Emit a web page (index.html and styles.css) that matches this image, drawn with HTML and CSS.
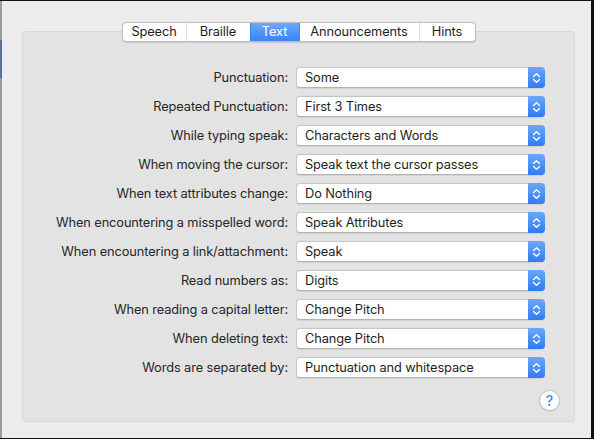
FILE: index.html
```html
<!DOCTYPE html>
<html>
<head>
<meta charset="utf-8">
<link rel="stylesheet" href="styles.css">
</head>
<body>
<div class="window">
  <div class="edge-accent"></div>
  <div class="content">
    <div class="tabs">
      <div class="tab t-speech">Speech</div>
      <div class="tab t-braille">Braille</div>
      <div class="tab t-text selected">Text</div>
      <div class="tab t-ann">Announcements</div>
      <div class="tab t-hints">Hints</div>
    </div>
    <div class="panel">
      <div class="form">
        <div class="label">Punctuation:</div>
        <div class="popup"><span class="value">Some</span><span class="stepper"><svg width="9" height="12" viewBox="0 0 9 12"><path d="M1.5 4.5 L4.5 1.8 L7.5 4.5 M1.5 7.5 L4.5 10.2 L7.5 7.5" fill="none" stroke="#fff" stroke-width="1.4" stroke-linecap="round" stroke-linejoin="round"/></svg></span></div>
        <div class="label">Repeated Punctuation:</div>
        <div class="popup"><span class="value">First 3 Times</span><span class="stepper"><svg width="9" height="12" viewBox="0 0 9 12"><path d="M1.5 4.5 L4.5 1.8 L7.5 4.5 M1.5 7.5 L4.5 10.2 L7.5 7.5" fill="none" stroke="#fff" stroke-width="1.4" stroke-linecap="round" stroke-linejoin="round"/></svg></span></div>
        <div class="label">While typing speak:</div>
        <div class="popup"><span class="value">Characters and Words</span><span class="stepper"><svg width="9" height="12" viewBox="0 0 9 12"><path d="M1.5 4.5 L4.5 1.8 L7.5 4.5 M1.5 7.5 L4.5 10.2 L7.5 7.5" fill="none" stroke="#fff" stroke-width="1.4" stroke-linecap="round" stroke-linejoin="round"/></svg></span></div>
        <div class="label">When moving the cursor:</div>
        <div class="popup"><span class="value">Speak text the cursor passes</span><span class="stepper"><svg width="9" height="12" viewBox="0 0 9 12"><path d="M1.5 4.5 L4.5 1.8 L7.5 4.5 M1.5 7.5 L4.5 10.2 L7.5 7.5" fill="none" stroke="#fff" stroke-width="1.4" stroke-linecap="round" stroke-linejoin="round"/></svg></span></div>
        <div class="label">When text attributes change:</div>
        <div class="popup"><span class="value">Do Nothing</span><span class="stepper"><svg width="9" height="12" viewBox="0 0 9 12"><path d="M1.5 4.5 L4.5 1.8 L7.5 4.5 M1.5 7.5 L4.5 10.2 L7.5 7.5" fill="none" stroke="#fff" stroke-width="1.4" stroke-linecap="round" stroke-linejoin="round"/></svg></span></div>
        <div class="label">When encountering a misspelled word:</div>
        <div class="popup"><span class="value">Speak Attributes</span><span class="stepper"><svg width="9" height="12" viewBox="0 0 9 12"><path d="M1.5 4.5 L4.5 1.8 L7.5 4.5 M1.5 7.5 L4.5 10.2 L7.5 7.5" fill="none" stroke="#fff" stroke-width="1.4" stroke-linecap="round" stroke-linejoin="round"/></svg></span></div>
        <div class="label">When encountering a link/attachment:</div>
        <div class="popup"><span class="value">Speak</span><span class="stepper"><svg width="9" height="12" viewBox="0 0 9 12"><path d="M1.5 4.5 L4.5 1.8 L7.5 4.5 M1.5 7.5 L4.5 10.2 L7.5 7.5" fill="none" stroke="#fff" stroke-width="1.4" stroke-linecap="round" stroke-linejoin="round"/></svg></span></div>
        <div class="label">Read numbers as:</div>
        <div class="popup"><span class="value">Digits</span><span class="stepper"><svg width="9" height="12" viewBox="0 0 9 12"><path d="M1.5 4.5 L4.5 1.8 L7.5 4.5 M1.5 7.5 L4.5 10.2 L7.5 7.5" fill="none" stroke="#fff" stroke-width="1.4" stroke-linecap="round" stroke-linejoin="round"/></svg></span></div>
        <div class="label">When reading a capital letter:</div>
        <div class="popup"><span class="value">Change Pitch</span><span class="stepper"><svg width="9" height="12" viewBox="0 0 9 12"><path d="M1.5 4.5 L4.5 1.8 L7.5 4.5 M1.5 7.5 L4.5 10.2 L7.5 7.5" fill="none" stroke="#fff" stroke-width="1.4" stroke-linecap="round" stroke-linejoin="round"/></svg></span></div>
        <div class="label">When deleting text:</div>
        <div class="popup"><span class="value">Change Pitch</span><span class="stepper"><svg width="9" height="12" viewBox="0 0 9 12"><path d="M1.5 4.5 L4.5 1.8 L7.5 4.5 M1.5 7.5 L4.5 10.2 L7.5 7.5" fill="none" stroke="#fff" stroke-width="1.4" stroke-linecap="round" stroke-linejoin="round"/></svg></span></div>
        <div class="label">Words are separated by:</div>
        <div class="popup"><span class="value">Punctuation and whitespace</span><span class="stepper"><svg width="9" height="12" viewBox="0 0 9 12"><path d="M1.5 4.5 L4.5 1.8 L7.5 4.5 M1.5 7.5 L4.5 10.2 L7.5 7.5" fill="none" stroke="#fff" stroke-width="1.4" stroke-linecap="round" stroke-linejoin="round"/></svg></span></div>
      </div>
      <div class="help-row">
        <div class="help">?</div>
      </div>
    </div>
  </div>
</div>
</body>
</html>
```
FILE: styles.css
```css
html, body {
  margin: 0;
  padding: 0;
  background: #111;
}
body {
  width: 594px;
  height: 439px;
  overflow: hidden;
  font-family: "Inter", "Liberation Sans", sans-serif;
  font-size: 12.8px;
  letter-spacing: -0.1px;
  color: #262626;
}
.window {
  position: relative;
  box-sizing: border-box;
  width: 591px;
  height: 437px;
  margin-top: 1px;
  background: #ececec;
  border-left: 2px solid #9a9a9a;
}
.edge-accent {
  position: absolute;
  left: -2px;
  top: 39px;
  width: 2px;
  height: 38px;
  background: #5b6f9c;
}
.content {
  display: flex;
  flex-direction: column;
  align-items: stretch;
  padding: 21px 16px 0 20px;
}
.tabs {
  position: relative;
  z-index: 1;
  align-self: center;
  display: flex;
  height: 20px;
  margin-bottom: -11px;
  background: #fff;
  border: 1px solid #bdbdbd;
  border-radius: 4px;
  box-shadow: 0 0.5px 1px rgba(0,0,0,0.12);
  overflow: hidden;
  box-sizing: border-box;
}
.tab {
  box-sizing: border-box;
  display: flex;
  align-items: center;
  justify-content: center;
  height: 100%;
  border-left: 1px solid #dcdcdc;
  color: #1e1e1e;
  line-height: 1;
}
.t-speech { width: 63px; }
.t-braille { width: 64px; }
.t-text { width: 49px; }
.t-ann { width: 120px; }
.t-hints { width: 56px; }
.tab:first-child { border-left: none; }
.tab.selected {
  background: linear-gradient(#6aa8fa, #3b84f6);
  color: #fff;
  border-left-color: #3b84f6;
}
.tab.selected + .tab { border-left-color: #3b84f6; }
.panel {
  box-sizing: border-box;
  height: 391px;
  background: #e3e3e3;
  border: 1px solid #d8d8d8;
  border-radius: 3px;
  padding: 35px 14px 0 0;
  display: flex;
  flex-direction: column;
}
.form {
  display: grid;
  grid-template-columns: 265px 249px;
  column-gap: 8px;
  row-gap: 8px;
  align-items: center;
}
.label {
  text-align: right;
  white-space: nowrap;
}
.popup {
  box-sizing: border-box;
  height: 21px;
  display: flex;
  align-items: stretch;
  background: #fff;
  border: 1px solid #c6c6c6;
  border-bottom-color: #b2b2b2;
  border-radius: 4px;
  box-shadow: 0 0.5px 1px rgba(0,0,0,0.08);
}
.popup .value {
  flex: 1;
  display: flex;
  align-items: center;
  padding-left: 8px;
  color: #1e1e1e;
  white-space: nowrap;
}
.stepper {
  width: 17px;
  margin: -1px -1px -1px 0;
  display: flex;
  align-items: center;
  justify-content: center;
  background: linear-gradient(#6aa8fa, #2f7bf5);
  border-radius: 0 4px 4px 0;
}
.help-row {
  display: flex;
  justify-content: flex-end;
  margin-top: 12px;
}
.help {
  box-sizing: border-box;
  width: 21px;
  height: 21px;
  border-radius: 50%;
  background: #fff;
  border: 1px solid #c2c2c2;
  box-shadow: 0 0.5px 1px rgba(0,0,0,0.15);
  display: flex;
  align-items: center;
  justify-content: center;
  color: #3f7ff0;
  font-size: 14px;
  font-weight: 500;
  line-height: 1;
}
```
